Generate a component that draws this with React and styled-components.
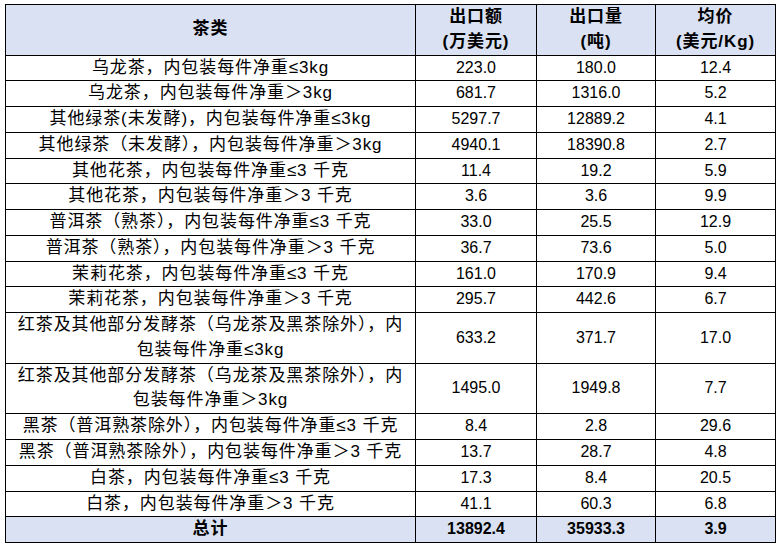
import React from 'react'
import styled, { createGlobalStyle } from 'styled-components'

const GlobalStyle = createGlobalStyle`
  body {
    margin: 0;
    background: #ffffff;
  }
`

const Page = styled.div`
  padding: 4px 5px;
  font-family: 'Liberation Sans', 'Noto Sans CJK SC', sans-serif;
  color: #000;
`

const Table = styled.table`
  border-collapse: collapse;
  table-layout: fixed;
  width: 770px;
`

const Row = styled.tr`
  background: ${p => (p.$shaded ? '#d9e1f2' : '#ffffff')};
`

const Cell = styled.td`
  border: 1px solid #000;
  padding: 0 2px;
  text-align: center;
  vertical-align: middle;
  line-height: 24.76px;
  font-size: ${p => (p.$num ? '16px' : '17px')};
  letter-spacing: ${p => (p.$num ? '0' : '0.9px')};
  font-weight: ${p => (p.$bold ? 'bold' : 'normal')};
  white-space: nowrap;
`

const rows = [
  ['乌龙茶，内包装每件净重≤3kg', '223.0', '180.0', '12.4'],
  ['乌龙茶，内包装每件净重＞3kg', '681.7', '1316.0', '5.2'],
  ['其他绿茶(未发酵)，内包装每件净重≤3kg', '5297.7', '12889.2', '4.1'],
  ['其他绿茶（未发酵），内包装每件净重＞3kg', '4940.1', '18390.8', '2.7'],
  ['其他花茶，内包装每件净重≤3 千克', '11.4', '19.2', '5.9'],
  ['其他花茶，内包装每件净重＞3 千克', '3.6', '3.6', '9.9'],
  ['普洱茶（熟茶），内包装每件净重≤3 千克', '33.0', '25.5', '12.9'],
  ['普洱茶（熟茶），内包装每件净重＞3 千克', '36.7', '73.6', '5.0'],
  ['茉莉花茶，内包装每件净重≤3 千克', '161.0', '170.9', '9.4'],
  ['茉莉花茶，内包装每件净重＞3 千克', '295.7', '442.6', '6.7'],
  [['红茶及其他部分发酵茶（乌龙茶及黑茶除外），内', '包装每件净重≤3kg'], '633.2', '371.7', '17.0'],
  [['红茶及其他部分发酵茶（乌龙茶及黑茶除外），内', '包装每件净重＞3kg'], '1495.0', '1949.8', '7.7'],
  ['黑茶（普洱熟茶除外），内包装每件净重≤3 千克', '8.4', '2.8', '29.6'],
  ['黑茶（普洱熟茶除外），内包装每件净重＞3 千克', '13.7', '28.7', '4.8'],
  ['白茶，内包装每件净重≤3 千克', '17.3', '8.4', '20.5'],
  ['白茶，内包装每件净重＞3 千克', '41.1', '60.3', '6.8'],
]

const Lines = ({ text }) =>
  Array.isArray(text)
    ? text.map((t, i) => (
        <React.Fragment key={i}>
          {i > 0 && <br />}
          {t}
        </React.Fragment>
      ))
    : text

export default function App() {
  return (
    <>
      <GlobalStyle />
      <Page>
        <Table>
          <colgroup>
            <col style={{ width: 410 }} />
            <col style={{ width: 121 }} />
            <col style={{ width: 119 }} />
            <col style={{ width: 120 }} />
          </colgroup>
          <thead>
            <Row $shaded>
              <Cell $bold>茶类</Cell>
              <Cell $bold>出口额<br />(万美元)</Cell>
              <Cell $bold>出口量<br />(吨)</Cell>
              <Cell $bold>均价<br />(美元/Kg)</Cell>
            </Row>
          </thead>
          <tbody>
            {rows.map(([name, value, volume, price], i) => (
              <Row key={i}>
                <Cell><Lines text={name} /></Cell>
                <Cell $num>{value}</Cell>
                <Cell $num>{volume}</Cell>
                <Cell $num>{price}</Cell>
              </Row>
            ))}
            <Row $shaded>
              <Cell $bold>总计</Cell>
              <Cell $bold $num>13892.4</Cell>
              <Cell $bold $num>35933.3</Cell>
              <Cell $bold $num>3.9</Cell>
            </Row>
          </tbody>
        </Table>
      </Page>
    </>
  )
}
